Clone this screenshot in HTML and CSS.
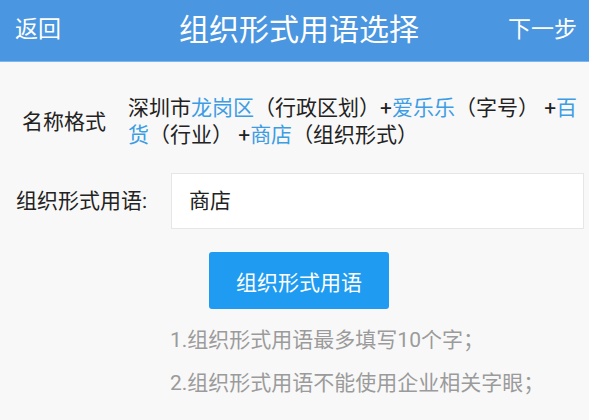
FILE: index.html
```html
<!DOCTYPE html>
<html lang="zh-CN">
<head>
<meta charset="utf-8">
<title>组织形式用语选择</title>
<link rel="stylesheet" href="styles.css">
</head>
<body>
<header class="topbar">
  <span class="nav-btn back">返回</span>
  <h1 class="title">组织形式用语选择</h1>
  <span class="nav-btn next">下一步</span>
</header>
<main class="content">
  <section class="format-row">
    <div class="format-label">名称格式</div>
    <p class="format-text"><span class="seg">深圳市</span><span class="seg hl">龙岗区</span><span class="seg">（行政区划）+</span><span class="seg hl">爱乐乐</span><span class="seg">（字号）&nbsp;+</span><span class="seg hl">百</span><span class="seg hl">货</span><span class="seg">（行业）&nbsp;+</span><span class="seg hl">商店</span><span class="seg">（组织形式）</span></p>
  </section>
  <section class="field-row">
    <label class="field-label">组织形式用语:</label>
    <div class="field-input">商店</div>
  </section>
  <div class="actions">
    <button class="primary-btn">组织形式用语</button>
    <ul class="hints">
      <li>1.组织形式用语最多填写10个字；</li>
      <li>2.组织形式用语不能使用企业相关字眼；</li>
    </ul>
  </div>
</main>
</body>
</html>
```
FILE: styles.css
```css
* { box-sizing: border-box; }
html, body {
  margin: 0;
  padding: 0;
}
body {
  width: 589px;
  height: 420px;
  overflow: hidden;
  background: #f8f8f8;
  font-family: Roboto, "Noto Sans CJK SC", sans-serif;
  color: #222;
}
.topbar {
  height: 62px;
  background: #4a96e0;
  border-bottom: 1px solid #7db6ec;
  display: grid;
  grid-template-columns: 1fr auto 1fr;
  align-items: center;
  padding: 0 12px 2px 15px;
  color: #fff;
}
.nav-btn {
  font-size: 23px;
  line-height: 30px;
}
.back { justify-self: start; }
.next { justify-self: end; }
.title {
  margin: 0;
  padding-left: 6px;
  font-size: 30px;
  font-weight: 400;
  line-height: 40px;
}
.content {
  padding-top: 33px;
}
.format-row {
  display: flex;
  align-items: center;
  padding: 0 6px 0 22px;
}
.format-label {
  width: 106px;
  flex: none;
  font-size: 21px;
  line-height: 28px;
  padding-bottom: 1px;
}
.format-text {
  margin: 0;
  font-size: 21px;
  line-height: 27px;
  color: #222;
}
.seg {
  display: inline-block;
  line-height: 27px;
  height: 27px;
  vertical-align: top;
}
.hl { color: #3d9de3; }
.field-row {
  display: flex;
  align-items: center;
  margin-top: 24px;
  padding: 0 5px 0 16px;
}
.field-label {
  width: 155px;
  flex: none;
  font-size: 21px;
  line-height: 28px;
}
.field-input {
  flex: 1;
  height: 56px;
  background: #fff;
  border: 1px solid #e6e6e6;
  padding-left: 17px;
  font-size: 21px;
  line-height: 54px;
  color: #222;
}
.actions {
  padding-left: 170px;
}
.primary-btn {
  display: block;
  margin: 23px 0 0 39px;
  width: 180px;
  height: 57px;
  border: none;
  border-radius: 3px;
  background: #1f9cf1;
  color: #fff;
  font-family: inherit;
  font-size: 21px;
  padding: 0;
}
.hints {
  list-style: none;
  margin: 10px 0 0;
  padding: 0;
  color: #9b9b9b;
  font-size: 21px;
  line-height: 43px;
}
```
